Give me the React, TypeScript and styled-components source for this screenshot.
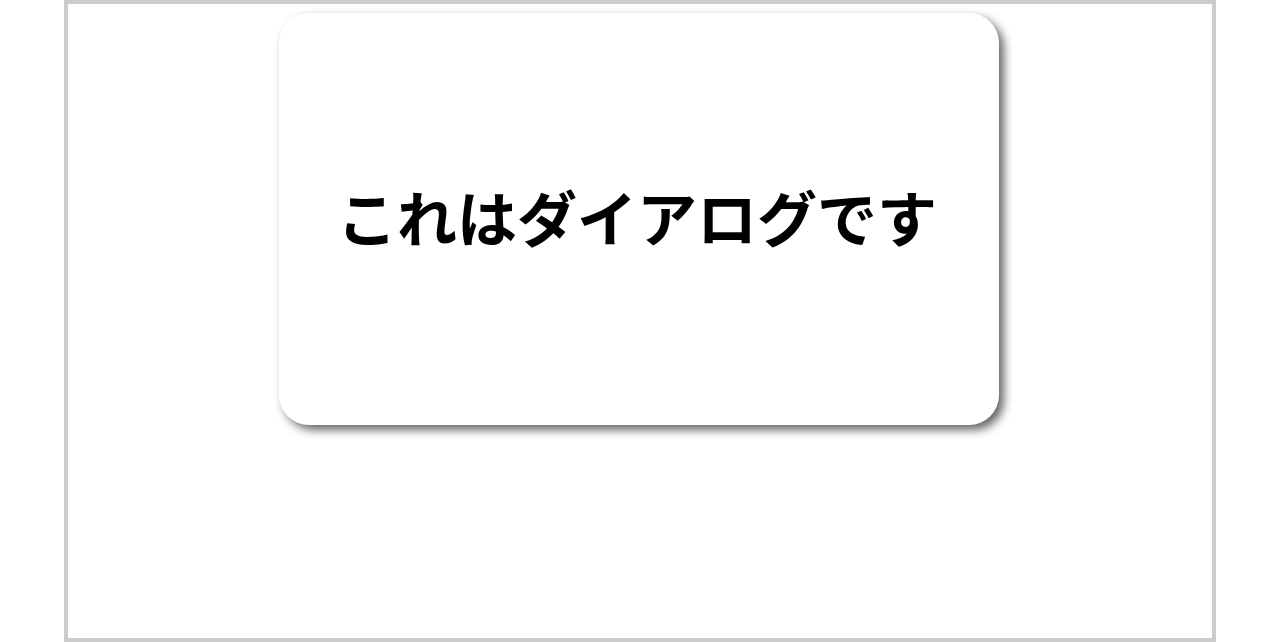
import styled, { createGlobalStyle } from 'styled-components';

const GlobalStyle = createGlobalStyle`
  html, body {
    margin: 0;
    padding: 0;
    background: #ffffff;
  }
  body {
    font-family: "Noto Sans CJK JP", "Noto Sans", sans-serif;
  }
`;

const Frame = styled.div`
  box-sizing: border-box;
  width: 1152px;
  height: 642px;
  margin: 0 auto;
  border: 4px solid #cccccc;
  display: flex;
  justify-content: center;
  padding: 9px 2px 0 0;
`;

const Dialog = styled.div`
  box-sizing: border-box;
  width: 720px;
  height: 412px;
  padding-bottom: 8px;
  background: #ffffff;
  border-radius: 30px;
  box-shadow: 5px 5px 10px rgba(0, 0, 0, 0.6);
  display: flex;
  align-items: center;
  justify-content: center;
`;

const Message = styled.p`
  margin: 0 4px 0 0;
  font-size: 60px;
  font-weight: 700;
  color: #000000;
  letter-spacing: 0;
`;

export default function App() {
  return (
    <>
      <GlobalStyle />
      <Frame>
        <Dialog>
          <Message>これはダイアログです</Message>
        </Dialog>
      </Frame>
    </>
  );
}
